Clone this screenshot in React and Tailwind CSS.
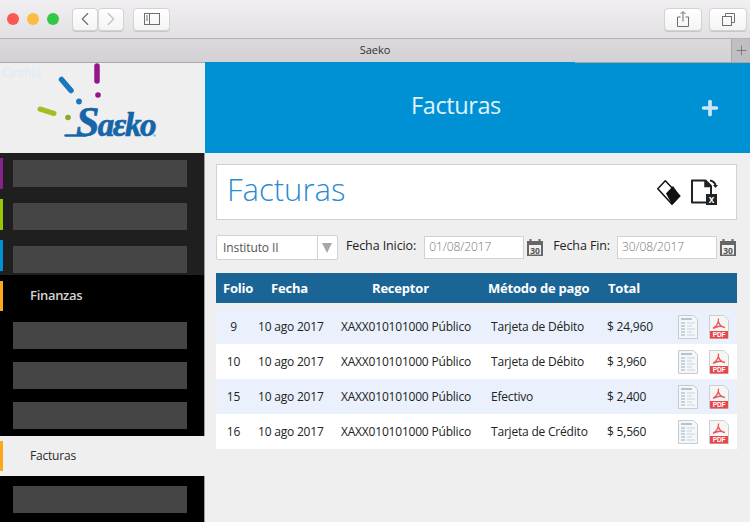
import React from 'react';
import { ChevronLeft, ChevronRight, Plus } from 'lucide-react';

const font = { fontFamily: '"Open Sans", "Liberation Sans", sans-serif' };

const rows = [
  { folio: '9', pago: 'Tarjeta de Débito', total: '$ 24,960', tint: true },
  { folio: '10', pago: 'Tarjeta de Débito', total: '$ 3,960' },
  { folio: '15', pago: 'Efectivo', total: '$ 2,400', tint: true },
  { folio: '16', pago: 'Tarjeta de Crédito', total: '$ 5,560' },
];

const ToolButton = ({ className, children }) => (
  <div className={`h-[23px] flex items-center justify-center bg-gradient-to-b from-white to-[#f5f4f5] border border-[#d4d2d4] rounded-[4px] shadow-[0_1px_0_#c8c6c8] ${className}`}>
    {children}
  </div>
);

const Logo = () => (
  <svg viewBox="0 63 204 90" className="w-[204px] h-[90px] block">
    <path d="M97 66v15" stroke="#93178a" strokeWidth="5.5" strokeLinecap="round" />
    <circle cx="98" cy="95" r="2.8" fill="#93178a" />
    <path d="M61.5 79.5l9.5 11" stroke="#1a76bd" strokeWidth="5.5" strokeLinecap="round" />
    <circle cx="79" cy="101.500" r="2.9" fill="#1a76bd" />
    <path d="M40 109l14 4.500" stroke="#a3bd22" strokeWidth="5" strokeLinecap="round" />
    <circle cx="68" cy="117.500" r="2.800" fill="#90a81f" />
    <path d="M65.500 135.500h20" stroke="#1565a8" strokeWidth="2.500" strokeLinecap="round" />
    <text x="76" y="136" fill="#1565a8" stroke="#1565a8" strokeWidth="0.700" fontStyle="italic" fontWeight="700" fontSize="33" letterSpacing="-1.500" fontFamily="'Liberation Serif', serif">
      <tspan fontSize="42">S</tspan>aεko
    </text>
    <circle cx="154.500" cy="135.500" r="1.300" fill="#8fbfe3" />
  </svg>
);

const CalendarIcon = () => (
  <svg viewBox="0 0 18 19" className="w-[18px] h-[19px] shrink-0">
    <path d="M1 3h2.500V1h2v2h7V1h2v2H17v15H1z" fill="#666" />
    <rect x="3" y="7" width="12" height="9.500" fill="#f1f1f1" />
    <text x="9" y="15.500" textAnchor="middle" fontSize="8.500" fontWeight="700" fill="#555" fontFamily="'Open Sans', sans-serif">30</text>
  </svg>
);

const EraserIcon = () => (
  <svg viewBox="0 0 24 25" className="w-[24px] h-[25px]">
    <path d="M8.300.800L.800 8.700 15 24.200l7.800-8.200z" fill="#fff" stroke="#111" strokeWidth="1.500" strokeLinejoin="round" />
    <path d="M9 13.500l7-7.500 7 10-8 8.500z" fill="#111" />
  </svg>
);

const ExportIcon = () => (
  <svg viewBox="0 0 28 26" className="w-[28px] h-[26px]">
    <path d="M2 1.500h13.500L21 7v16.500H2z" fill="#fff" stroke="#222" strokeWidth="2" strokeLinejoin="round" />
    <path d="M15 1.500V7.500h6" fill="#222" stroke="#222" strokeWidth="1.500" />
    <path d="M20 1.500c3 .5 5 2 5.500 5" fill="none" stroke="#222" strokeWidth="1.800" />
    <path d="M23 6h5l-2.500 3z" fill="#222" />
    <rect x="16" y="15" width="11" height="11" fill="#222" />
    <text x="21.500" y="24" textAnchor="middle" fontSize="10" fontWeight="700" fill="#fff" fontFamily="'Liberation Sans', sans-serif">x</text>
  </svg>
);

const ListDocIcon = () => (
  <svg viewBox="0 0 20 24" className="w-[20px] h-[24px]">
    <path d="M.500.500h15l4 4v19H.500z" fill="#f4f6f8" stroke="#c6cbcf" />
    <path d="M3 4h11" stroke="#9fb3c4" strokeWidth="1.500" />
    <path d="M3 8h4M3 11h4M3 14h4M3 17h4M3 20h4" stroke="#c4d3e0" strokeWidth="2" />
    <path d="M9 8h8M9 11h5M9 14h8M9 17h5M9 20h8" stroke="#d6e0e8" strokeWidth="1.500" />
  </svg>
);

const PdfIcon = () => (
  <svg viewBox="0 0 20 24" className="w-[20px] h-[24px]">
    <path d="M.500.500h14.500l4.500 4.500v18.500H.500z" fill="#f5f5f5" stroke="#cfcfcf" />
    <path d="M4 13c3-1 6-5 5.500-9.500M9.500 7c1 3 3 5 6.500 5.500M4 13.500c3-2 8-3 11-1" fill="none" stroke="#e8585a" strokeWidth="1.300" />
    <rect x="1" y="16" width="18" height="7.500" fill="#e8474a" />
    <text x="10" y="22.300" textAnchor="middle" fontSize="6.500" fontWeight="700" fill="#fff" fontFamily="'Liberation Sans', sans-serif">PDF</text>
  </svg>
);

const Bar = () => <div className="w-[174px] h-[27px] bg-[#454545]" />;

const App = () => (
  <div className="w-[750px] h-[522px] overflow-hidden flex flex-col bg-[#efefef]" style={font}>
    {/* ===== BROWSER TOOLBAR ===== */}
    <div className="h-[38px] shrink-0 flex items-center pl-[7px] pr-[3px] bg-gradient-to-b from-[#f1eff1] to-[#e2e0e2]">
      <div className="flex gap-[8px]">
        <div className="w-[12px] h-[12px] rounded-full bg-[#fc5753]" />
        <div className="w-[12px] h-[12px] rounded-full bg-[#fdbc40]" />
        <div className="w-[12px] h-[12px] rounded-full bg-[#33c748]" />
      </div>
      <ToolButton className="w-[26px] ml-[13px]">
        <ChevronLeft size={22} strokeWidth={1.200} className="text-[#6b6b6b]" />
      </ToolButton>
      <ToolButton className="w-[26px]">
        <ChevronRight size={22} strokeWidth={1.200} className="text-[#bdbdbd]" />
      </ToolButton>
      <ToolButton className="w-[37px] ml-[9px]">
        <svg viewBox="0 0 16 12" className="w-[16px] h-[12px]">
          <rect x=".5" y=".5" width="15" height="11" fill="none" stroke="#6e6e6e" />
          <path d="M5.500 0v12M2 3h2M2 5h2M2 7h2" stroke="#6e6e6e" fill="none" />
        </svg>
      </ToolButton>
      <div className="flex-1" />
      <ToolButton className="w-[38px]">
        <svg viewBox="0 0 12 16" className="w-[12px] h-[16px]">
          <path d="M3.500 6H.5v9.500h11V6h-3M6 10.500V1M3.500 3L6 .5 8.500 3" fill="none" stroke="#6e6e6e" />
        </svg>
      </ToolButton>
      <ToolButton className="w-[38px] ml-[7px]">
        <svg viewBox="0 0 13 13" className="w-[13px] h-[13px]">
          <path d="M3.500 3V.5h9v9H10" fill="none" stroke="#6e6e6e" />
          <rect x=".5" y="3.500" width="9" height="9" fill="none" stroke="#6e6e6e" />
        </svg>
      </ToolButton>
    </div>

    {/* ===== TAB BAR ===== */}
    <div className="h-[24px] shrink-0 flex border-t border-[#b6b4b6] bg-gradient-to-b from-[#dbd9db] to-[#d3d1d3]">
      <div className="flex-1 pl-[19px] flex items-center justify-center text-[11px] text-[#333]">Saeko</div>
      <div className="w-[19px] flex items-center justify-center bg-[#c0bec0] border-l border-[#a9a7a9]">
        <Plus size={15} strokeWidth={1} className="text-[#555]" />
      </div>
    </div>
    <div className="h-px shrink-0 flex bg-[#a9a7a9]">
      <div className="w-[205px]" />
      <div className="w-[370px] bg-[#0091d5]" />
    </div>

    <div className="flex-1 min-h-0 flex">
      {/* ===== SIDEBAR ===== */}
      <div className="w-[205px] shrink-0 flex flex-col">
        <div className="h-[90px] shrink-0 bg-[#efefef] relative">
          <Logo />
          <span className="absolute left-[2px] top-[1px] text-[12px] text-[#d8ecfa]">Cinthia</span>
        </div>
        <div className="h-[122px] shrink-0 bg-[#1f1f1f] border-r border-[#9c9c9c] flex">
          <div className="w-[3px] pt-[5px] flex flex-col gap-[10px]">
            <div className="h-[31px] bg-[#86228e]" />
            <div className="h-[31px] bg-[#97c700]" />
            <div className="h-[31px] bg-[#0091d5]" />
          </div>
          <div className="ml-[10px] pt-[7px] flex flex-col gap-[16px]">
            <Bar />
            <Bar />
            <Bar />
          </div>
        </div>
        <div className="h-[161px] shrink-0 bg-black border-r border-[#9c9c9c] flex flex-col">
          <div className="h-[47px] shrink-0 pt-[6px] pb-[11px] flex items-center">
            <div className="w-[3px] h-[30px] bg-[#fca81c]" />
            <span className="ml-[27px] pb-[1px] text-[13px] font-semibold text-[#d4d4d4] tracking-[-0.3px]">Finanzas</span>
          </div>
          <div className="pl-[13px] flex flex-col gap-[13px]">
            <Bar />
            <Bar />
            <Bar />
          </div>
        </div>
        <div className="h-[40px] shrink-0 bg-[#efefef] flex items-center">
          <div className="w-[3px] h-[30px] bg-[#fca81c]" />
          <span className="ml-[27px] text-[12px] text-[#2a2a2a] tracking-[-0.2px]">Facturas</span>
        </div>
        <div className="flex-1 bg-black border-r border-[#9c9c9c] pl-[13px] pt-[10px]">
          <Bar />
        </div>
      </div>

      {/* ===== MAIN ===== */}
      <div className="flex-1 min-w-0 flex flex-col">
        <div className="h-[90px] shrink-0 bg-[#0091d5] flex items-center">
          <div className="flex-1 pl-[206px] pb-[5px] text-[23.500px] text-[#e3f1fa] tracking-[-0.4px]">Facturas</div>
          <Plus size={22} strokeWidth={4} className="text-[#cfe6f5] mr-[29px]" />
        </div>

        <div className="pl-[11px] pr-[13px] pt-[11px]">
          {/* Title card */}
          <div className="h-[56px] bg-white border border-[#d2d2d2] flex items-center pl-[10px] pr-[18px]">
            <h1 className="text-[31px] leading-none font-light text-[#2a8bcf] pb-[6px]">Facturas</h1>
            <div className="flex-1" />
            <EraserIcon />
            <div className="ml-[9px]"><ExportIcon /></div>
          </div>

          {/* Filters */}
          <div className="mt-[15px] h-[25px] flex items-center text-[12.500px] text-[#222] tracking-[-0.1px]">
            <div className="w-[122px] h-[25px] flex bg-white border border-[#d2d2d2] rounded-[2px]">
              <div className="flex-1 pl-[6px] flex items-center text-[12px] text-[#555]">Instituto II</div>
              <div className="w-[20px] flex items-center justify-center border-l border-[#d2d2d2]">
                <div className="w-0 h-0 border-x-[5.500px] border-x-transparent border-t-[10px] border-t-[#a8a8a8]" />
              </div>
            </div>
            <span className="ml-[8px] pb-[2px] whitespace-nowrap">Fecha Inicio:</span>
            <div className="ml-[8px] w-[100px] h-[23px] pl-[4px] pb-[2px] flex items-center bg-white border border-[#d2d2d2] text-[12px] font-light text-[#777]">01/08/2017</div>
            <div className="ml-[2px]"><CalendarIcon /></div>
            <span className="ml-[9px] pb-[2px] whitespace-nowrap">Fecha Fin:</span>
            <div className="ml-[7px] w-[100px] h-[23px] pl-[4px] pb-[2px] flex items-center bg-white border border-[#d2d2d2] text-[12px] font-light text-[#777]">30/08/2017</div>
            <div className="ml-[2px]"><CalendarIcon /></div>
          </div>

          {/* Table */}
          <div className="mt-[13px] h-[30px] bg-[#1b6496] grid grid-cols-[48px_101px_116px_120px_1fr] items-center pl-[7px] pt-[1px] text-[13px] font-bold text-white tracking-[-0.2px]">
            <span>Folio</span>
            <span>Fecha</span>
            <span>Receptor</span>
            <span>Método de pago</span>
            <span>Total</span>
          </div>
          <div className="mt-[6px]">
            {rows.map((row) => (
              <div
                key={row.folio}
                className={`h-[35px] grid grid-cols-[35px_90px_150px_116px_71px_31px_1fr] items-center text-[12px] text-[#222] tracking-[-0.2px] ${row.tint ? 'bg-[#eaf1fc]' : 'bg-white'}`}
              >
                <span className="text-center">{row.folio}</span>
                <span className="pl-[7px] whitespace-nowrap">10 ago 2017</span>
                <span className="whitespace-nowrap">XAXX010101000 Público</span>
                <span className="whitespace-nowrap">{row.pago}</span>
                <span className="whitespace-nowrap">{row.total}</span>
                <ListDocIcon />
                <PdfIcon />
              </div>
            ))}
          </div>
        </div>
      </div>
    </div>
  </div>
);

export default App;
